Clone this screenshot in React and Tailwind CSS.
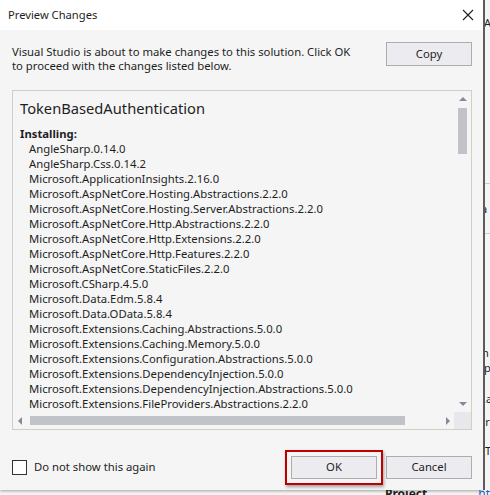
const packages = [
  'AngleSharp.0.14.0',
  'AngleSharp.Css.0.14.2',
  'Microsoft.ApplicationInsights.2.16.0',
  'Microsoft.AspNetCore.Hosting.Abstractions.2.2.0',
  'Microsoft.AspNetCore.Hosting.Server.Abstractions.2.2.0',
  'Microsoft.AspNetCore.Http.Abstractions.2.2.0',
  'Microsoft.AspNetCore.Http.Extensions.2.2.0',
  'Microsoft.AspNetCore.Http.Features.2.2.0',
  'Microsoft.AspNetCore.StaticFiles.2.2.0',
  'Microsoft.CSharp.4.5.0',
  'Microsoft.Data.Edm.5.8.4',
  'Microsoft.Data.OData.5.8.4',
  'Microsoft.Extensions.Caching.Abstractions.5.0.0',
  'Microsoft.Extensions.Caching.Memory.5.0.0',
  'Microsoft.Extensions.Configuration.Abstractions.5.0.0',
  'Microsoft.Extensions.DependencyInjection.5.0.0',
  'Microsoft.Extensions.DependencyInjection.Abstractions.5.0.0',
  'Microsoft.Extensions.FileProviders.Abstractions.2.2.0',
];

const font = "font-['Noto_Sans','Open_Sans',sans-serif]";

const Arrow = ({ dir }) => {
  const pts = {
    up: '0,4 4,0 8,4',
    down: '0,0 8,0 4,4',
    left: '4,0 4,8 0,4',
    right: '0,0 0,8 4,4',
  }[dir];
  const vertical = dir === 'up' || dir === 'down';
  return (
    <svg width={vertical ? 8 : 4} height={vertical ? 4 : 8} viewBox={vertical ? '0 0 8 4' : '0 0 4 8'}>
      <polygon points={pts} fill="#868999" />
    </svg>
  );
};

const Backdrop = () => (
  <div className="w-[7px] h-[490px] flex-none overflow-hidden bg-[#f5f5f5] border-l-2 border-[#5c5c5c] text-[11px] leading-[13px] text-[#1e1e1e]">
    <div className="mt-[16px] -ml-[1px]">A</div>
    <div className="mt-[154px] h-px bg-[#cccccc]" />
    <div className="mt-[18px] -ml-[4px]">a</div>
    <div className="mt-[18px] h-px bg-[#cccccc]" />
    <div className="mt-[112px] -ml-[3px]">n</div>
    <div className="mt-[2px] -ml-[1px]">p</div>
    <div className="mt-[18px] -ml-[2px]">.a</div>
    <div className="mt-[10px] -ml-[2px]">'r</div>
    <div className="mt-[16px]">Tu</div>
  </div>
);

export default function App() {
  return (
    <div className={`w-[490px] h-[495px] overflow-hidden bg-[#f5f5f5] ${font} text-[#1e1e1e]`}>
      <div className="flex">
        <div className="w-[483px] h-[490px] flex-none flex flex-col bg-[#f5f5f5] shadow-[0_1px_3px_rgba(0,0,0,0.35)]">
          {/* title bar */}
          <div className="h-[30px] flex-none bg-white flex items-center justify-between pl-[8px] pr-[8px]">
            <span className="text-[11.2px] leading-none">Preview Changes</span>
            <svg width="12" height="12" viewBox="0 0 12 12" className="mr-[1px]">
              <path d="M1 1 L11 11 M11 1 L1 11" stroke="#1e1e1e" strokeWidth="1.1" />
            </svg>
          </div>

          {/* intro */}
          <div className="h-[60px] flex-none flex justify-between items-start pt-[12px] pl-[12px] pr-[11px]">
            <p className="text-[11.3px] leading-[14px] mt-[3px]">
              Visual Studio is about to make changes to this solution. Click OK
              <br />
              to proceed with the changes listed below.
            </p>
            <button className="w-[86px] h-[24px] bg-[#ececf0] border border-[#adadad] text-[11.3px]">
              Copy
            </button>
          </div>

          {/* list box */}
          <div className="mx-[12px] w-[460px] h-[340px] flex-none flex flex-col border border-[#cfcfc4]">
            <div className="flex flex-1 min-h-0">
              <div className="flex-1 overflow-hidden pl-[7px] pt-[7px] whitespace-nowrap">
                <div className="text-[14.7px] leading-[20px]">TokenBasedAuthentication</div>
                <div className="mt-[8px] text-[11.3px] leading-[15px] font-bold">Installing:</div>
                {packages.map((p) => (
                  <div key={p} className="pl-[9px] text-[11.3px] leading-[15px]">
                    {p}
                  </div>
                ))}
              </div>
              <div className="w-[17px] flex-none flex flex-col items-center pt-[6px] pb-[6px]">
                <Arrow dir="up" />
                <div className="mt-[7px] w-[9px] h-[46px] bg-[#c2c3c9]" />
                <div className="flex-1" />
                <Arrow dir="down" />
              </div>
            </div>
            <div className="h-[17px] flex-none flex">
              <div className="flex-1 flex items-center pl-[5px] pr-[4px]">
                <Arrow dir="left" />
                <div className="ml-[8px] w-[375px] h-[9px] bg-[#c2c3c9]" />
                <div className="flex-1" />
                <Arrow dir="right" />
              </div>
              <div className="w-[17px] h-[17px] flex-none bg-[#e8e8ec]" />
            </div>
          </div>

          {/* footer */}
          <div className="flex-1 flex items-center pt-[14px] pl-[12px] pr-[11px]">
            <div className="flex items-center gap-[7px]">
              <div className="w-[15px] h-[15px] border border-[#333333] bg-white" />
              <span className="text-[11.3px]">Do not show this again</span>
            </div>
            <div className="flex-1" />
            <div className="border-2 border-[#c00000] p-[4px] shadow-[1px_2px_3px_rgba(0,0,0,0.35)]">
              <button className="block w-[86px] h-[23px] bg-[#ececf0] border border-[#adadad] text-[11.3px]">
                OK
              </button>
            </div>
            <button className="ml-[3px] w-[86px] h-[23px] bg-[#ececf0] border border-[#adadad] text-[11.3px]">
              Cancel
            </button>
          </div>
        </div>
        <Backdrop />
      </div>
      <div className="h-[5px] overflow-hidden flex">
        <div className="ml-[385px] text-[12px] font-bold leading-[8px]">Project URL:</div>
        <div className="ml-[26px] text-[12px] leading-[8px] text-[#1a5ac8]">ht</div>
      </div>
    </div>
  );
}
